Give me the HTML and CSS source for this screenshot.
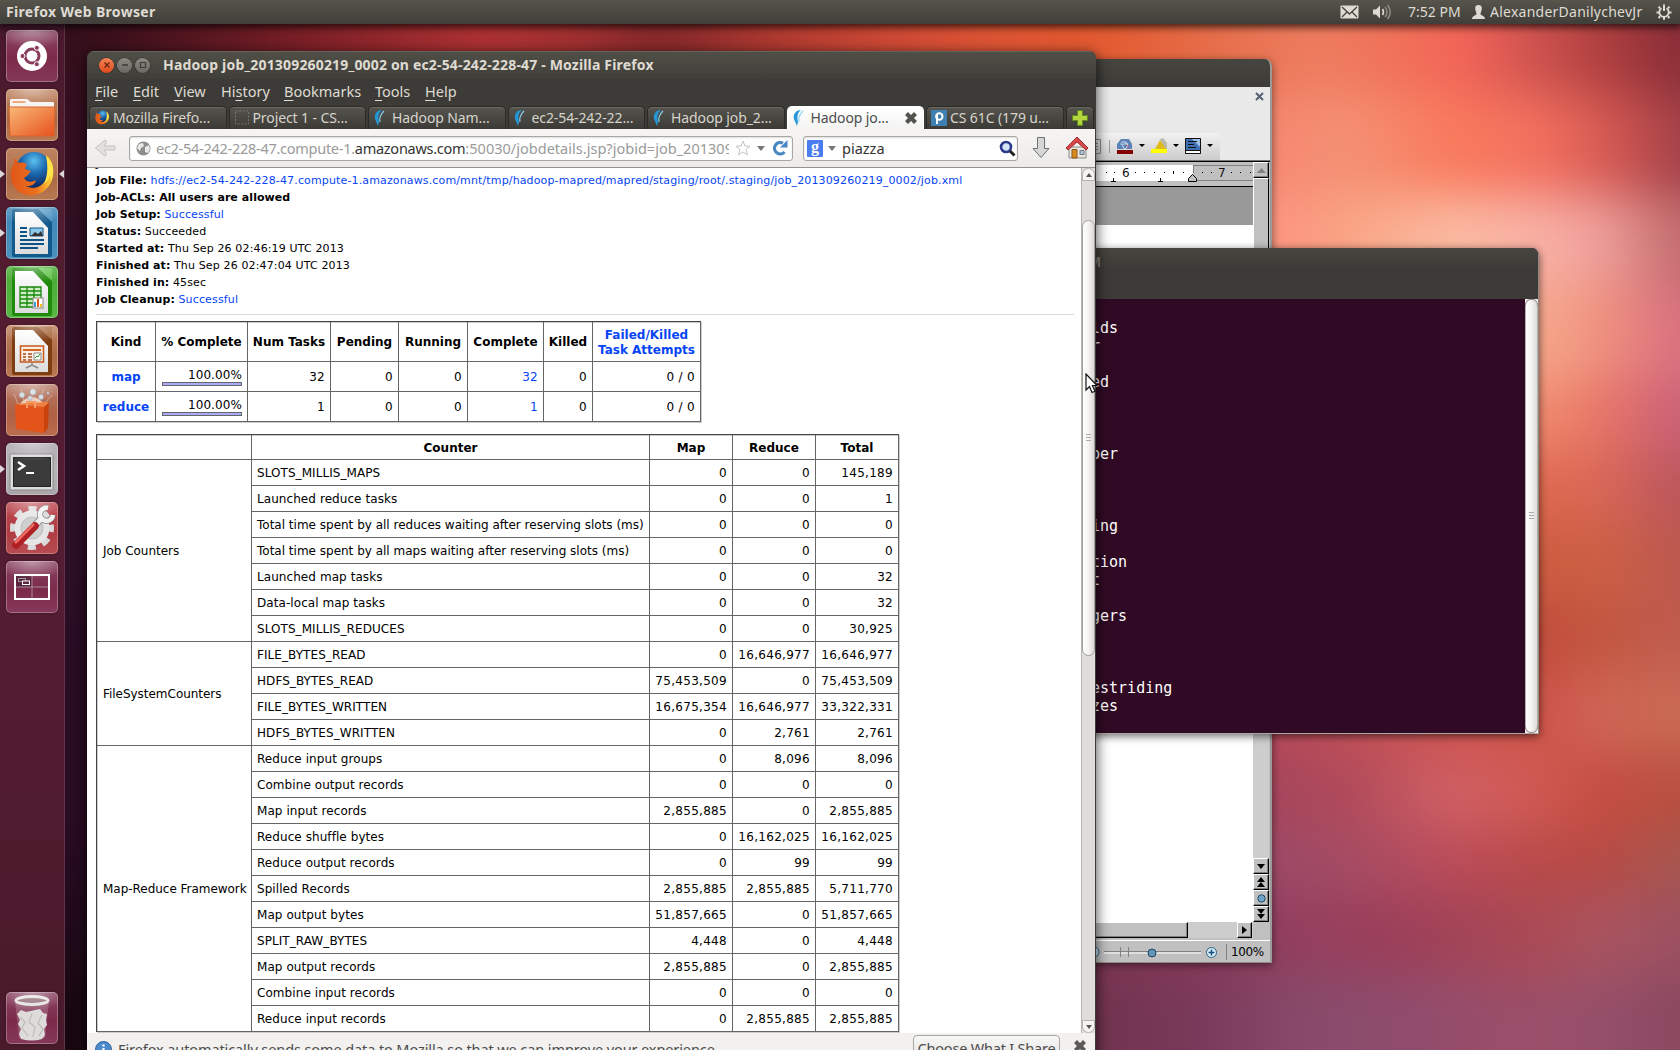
FILE: index.html
```html
<!DOCTYPE html>
<html lang="en">
<head>
<meta charset="utf-8">
<title>Hadoop job_201309260219_0002 on ec2-54-242-228-47 - Mozilla Firefox</title>
<link rel="stylesheet" href="styles.css">
</head>
<body>
<svg width="0" height="0" class="defs">
  <defs>
    <linearGradient id="orange" x1="0" y1="0" x2="1" y2="1"><stop offset="0" stop-color="#f8b878"/><stop offset="1" stop-color="#e8511c"/></linearGradient>
    <radialGradient id="globe" cx=".5" cy=".25" r=".7"><stop offset="0" stop-color="#5cc0ee"/><stop offset=".5" stop-color="#1c68b0"/><stop offset="1" stop-color="#0b2c66"/></radialGradient>
    <linearGradient id="fox" x1="0" y1="0" x2="1" y2="0"><stop offset="0" stop-color="#e0571a"/><stop offset=".6" stop-color="#ea6f1e"/><stop offset="1" stop-color="#fddc3a"/></linearGradient>
    <linearGradient id="paper" x1="0" y1="0" x2="0" y2="1"><stop offset="0" stop-color="#fff"/><stop offset="1" stop-color="#dcdcdc"/></linearGradient>
    <symbol id="firefox" viewBox="0 0 44 46">
      <circle cx="24" cy="19" r="18" fill="url(#globe)"/>
      <path d="M36 4c7 5 9 15 6 25-4 11-15 17-25 15C6 42 0 33 1 22c0-4 1-7 3-9l0-6 5 5c3-1 6 0 8 1l-2 5 6 2-4 5-3 2c2 4 7 5 12 2-1 5-6 7-11 6 9 5 19 0 22-9 2-8 1-14-1-22z" fill="url(#fox)"/>
      <path d="M36 5c7 6 9 16 5 25 0-3 0-5-1-6-1 4-3 7-6 9 4-9 4-18 2-28z" fill="#fde64a"/>
    </symbol>
    <symbol id="feather" viewBox="0 0 13 16"><path d="M8 0C3 0 0 4 1 9l3 7 1-4C4 7 4 3 8 0z" fill="#2397d8"/><path d="M6 12C5 8 7 4 10 1" fill="none" stroke="#8fd2f2" stroke-width="1.1"/></symbol>
    <symbol id="cross" viewBox="0 0 12 12"><path d="M3 0l3 3 3-3 3 3-3 3 3 3-3 3-3-3-3 3-3-3 3-3-3-3z"/></symbol>
  </defs>
</svg>
<div class="desktop">
  <div class="wallpaper"><i class="b1"></i><i class="b2"></i><i class="b3"></i><i class="b4"></i><i class="b5"></i><i class="b6"></i><i class="b7"></i><i class="b8"></i><i class="b9"></i><i class="b10"></i><i class="b11"></i><i class="b12"></i><i class="b13"></i></div>

  <header class="panel">
    <b class="app-name">Firefox Web Browser</b>
    <svg class="p-mail" width="19" height="14" viewBox="0 0 19 14"><rect x=".5" y=".5" width="18" height="13" rx="1" fill="#dfdbd2"/><path d="M2 2l7.500 7L17 2M2 12l5-5M17 12l-5-5" fill="none" stroke="#45433d" stroke-width="1.3"/></svg>
    <svg class="p-sound" width="22" height="16" viewBox="0 0 22 16"><path d="M1 5.500h3l4-4v13l-4-4H1z" fill="#dfdbd2"/><path d="M10.500 5q2 3 0 6" fill="none" stroke="#dfdbd2" stroke-width="1.600"/><path d="M13 3q4 5 0 10M15.500 1q5.500 7 0 14" fill="none" stroke="#8d8a82" stroke-width="1.600"/></svg>
    <span class="clock">7:52 PM</span>
    <svg class="p-user" width="13" height="14" viewBox="0 0 13 14"><path d="M6.500 0C9 0 10 1.500 9.800 4 9.600 6.500 8.500 7 8.500 9c0 1.500 4.500 1.500 4.500 5H0c0-3.500 4.500-3.500 4.500-5 0-2-1.100-2.500-1.300-5C3 1.500 4 0 6.500 0z" fill="#dfdbd2"/></svg>
    <span class="user">AlexanderDanilychevJr</span>
    <svg class="p-gear" width="16" height="16" viewBox="0 0 16 16"><g fill="none" stroke="#dfdbd2"><path d="M5.500 4.200a4.700 4.700 0 1 0 5 0" stroke-width="1.800"/><path d="M8 .5v6.500" stroke-width="2"/><path d="M2.500 2.800l1.500 1.500M13.500 2.800l-1.500 1.500M.5 8.500h2.500M13 8.500h2.500M2.500 14l1.700-1.700M13.500 14l-1.700-1.700M8 13v2.800" stroke-width="2"/></g></svg>
  </header>

  <nav class="launcher">
    <div class="tile plum"><svg viewBox="0 0 52 52"><circle cx="26" cy="26" r="15" fill="#fff"/><circle cx="26" cy="26" r="7" fill="none" stroke="#8a3a5a" stroke-width="3"/><g fill="#8a3a5a" stroke="#fff" stroke-width="1"><circle cx="16.500" cy="26" r="2.500"/><circle cx="30.800" cy="17.800" r="2.500"/><circle cx="30.800" cy="34.200" r="2.500"/></g></svg></div>
    <div class="tile copper"><svg viewBox="0 0 52 52"><path d="M4 11q0-1 1-1h16l4 3h22q1 0 1 1v6H4z" fill="#f7f3f0"/><path d="M6.500 13h13" stroke="#f0a070" stroke-width="2"/><path d="M3 18h46l-1 29H4z" fill="url(#orange)" stroke="#d8632c"/></svg></div>
    <div class="tile copper run focus"><svg viewBox="0 0 52 52"><use href="#firefox" x="4" y="3" width="44" height="46"/></svg></div>
    <div class="tile blue run"><svg viewBox="0 0 52 52"><rect x="6" y="2" width="40" height="48" rx="2" fill="#135a8c"/><path d="M32 2h14v13z" fill="#4c92bf"/><path d="M9 5h18l15 16v26H9z" fill="url(#paper)"/><path d="M14 21h7M14 25h7M14 29h7M14 33h24M14 37h24M14 41h18" stroke="#0d5486" stroke-width="2"/><path d="M24 21h13v8H24z" fill="#8ec8e8" stroke="#0d5486"/><path d="M25 29l4-4 3 2 3-3 2 5z" fill="#333"/></svg></div>
    <div class="tile green"><svg viewBox="0 0 52 52"><rect x="6" y="2" width="40" height="48" rx="2" fill="#1f8a0b"/><path d="M32 2h14v13z" fill="#5fc04a"/><path d="M9 5h18l15 16v26H9z" fill="url(#paper)"/><path d="M14 21h21v20H14zM14 25h21M14 29h21M14 33h21M14 37h21M21 21v20M28 21v20" fill="#cfeec4" stroke="#17870b" stroke-width="1.300"/><rect x="27" y="32" width="10" height="10" fill="#fff" stroke="#888"/><path d="M29 41v-5" stroke="#3a9ad8" stroke-width="2"/><path d="M32 41v-8" stroke="#e05a20" stroke-width="2"/><path d="M35 41v-3" stroke="#f0c020" stroke-width="2"/></svg></div>
    <div class="tile copper"><svg viewBox="0 0 52 52"><rect x="6" y="2" width="40" height="48" rx="2" fill="#7f3d12"/><path d="M32 2h14v13z" fill="#a7683d"/><path d="M9 5h18l15 16v26H9z" fill="url(#paper)"/><rect x="14.500" y="21" width="23" height="16" fill="#fbeee4" stroke="#c4581c" stroke-width="1.500"/><path d="M17 25h18" stroke="#d2671e" stroke-width="2"/><path d="M17 29h3M17 32h3M17 35h3M22 29h4M22 32h4M22 35h4" stroke="#a8481a" stroke-width="1.600"/><path d="M28 28h7v7h-7z" fill="#fff" stroke="#888"/><path d="M29 33l2-2 1 1 2-3" fill="none" stroke="#2aa02a"/><path d="M26 38v2M20 43l6-3 6 3" fill="none" stroke="#888" stroke-width="1.500"/></svg></div>
    <div class="tile copper2"><svg viewBox="0 0 52 52"><path d="M12 20L8 10M18 17l-3-12M26 16V4M33 17l5-12M38 20l8-9" stroke="#f6d6c6" stroke-opacity=".5"/><path d="M13 21q13-16 26 0z" fill="#fbe6da" fill-opacity=".8"/><g fill="#d3dade" stroke="#8f989e" stroke-width=".6"><circle cx="16" cy="11" r="2.800"/><circle cx="27" cy="8" r="3"/><circle cx="35" cy="13" r="2.600"/><circle cx="24" cy="14" r="2.300"/><circle cx="42" cy="9" r="1.200"/></g><path d="M9 20l29 3v26l-28-4z" fill="#e2541a"/><path d="M38 23l5-5-1 26-4 5z" fill="#c9430f"/><path d="M9 20l11-1 23-1-5 5z" fill="#ef8042"/><path d="M21 24v-6h8v6" fill="none" stroke="#f59a64" stroke-width="2"/></svg></div>
    <div class="tile silver run"><svg viewBox="0 0 52 52"><rect x="4" y="11" width="43" height="36" rx="1" fill="#dcdcdc" stroke="#888"/><rect x="7.500" y="14.500" width="37" height="29" fill="#3a3b3a" stroke="#222"/><path d="M12 19l6 4-6 4" fill="none" stroke="#fff" stroke-width="2.500"/><path d="M20 30h8" stroke="#fff" stroke-width="2"/></svg></div>
    <div class="tile red"><svg viewBox="0 0 52 52"><circle cx="26" cy="26" r="19" fill="none" stroke="#dadada" stroke-width="6" stroke-dasharray="8 6.920" stroke-dashoffset="4"/><circle cx="26" cy="26" r="13" fill="#dedede" stroke="#e6e6e6" stroke-width="9"/><circle cx="26" cy="26" r="11" fill="#cfcfcf" stroke="#bcbcbc"/><path d="M29 23l8-8" stroke="#777" stroke-width="7"/><path d="M42 6a6.500 6.500 0 1 0 5 7" fill="none" stroke="#777" stroke-width="6"/><path d="M29 23l8-8" stroke="#ececec" stroke-width="5.500"/><path d="M42 6a6.500 6.500 0 1 0 5 7" fill="none" stroke="#f2f2f2" stroke-width="4.500"/><path d="M10 43L29 24" stroke="#b01f24" stroke-width="7.500" stroke-linecap="round"/><path d="M9 41L28 22" stroke="#ee6a64" stroke-width="2.500"/></svg></div>
    <div class="tile plum"><svg viewBox="0 0 52 52"><rect x="9" y="14" width="34" height="24" fill="none" stroke="#fff" stroke-width="2"/><path d="M10 15h16v11H10z" fill="#5a2440"/><path d="M26 15v22M10 26h32" stroke="#a88a96"/><rect x="12.500" y="17.500" width="7" height="3" fill="none" stroke="#999"/><rect x="16.500" y="20" width="7" height="3.500" fill="#5a2440" stroke="#fff"/></svg></div>
    <div class="tile plum trash"><svg viewBox="0 0 52 52"><path d="M9 9l4 37q13 4 26 0l4-37z" fill="#fff" fill-opacity=".18"/><path d="M11 22l4-4 5 2 5-1 4-1 5-1 3 4 4 1-1 6 1 5-3 4 1 6-3 4q-10 3-21 0l-2-5 2-5-3-5 2-4z" fill="#dedcda"/><path d="M14 25l5 5-3 6 6 8M26 22l-3 8 6 5-2 10M36 23l-4 8 5 6-4 7" fill="none" stroke="#bfbbb9" stroke-width="1.200"/><ellipse cx="26" cy="8.500" rx="16" ry="4" fill="#8d6673" stroke="#e4e2e0" stroke-width="3"/></svg></div>
  </nav>

  <section class="win writer">
    <div class="w-title"></div>
    <div class="w-chrome">
      <span class="w-close"><svg width="9" height="9" viewBox="0 0 9 9"><path d="M1 1l7 7M8 1L1 8" stroke="#536173" stroke-width="2"/></svg></span>
      <div class="w-tools">
        <svg width="124" height="27" viewBox="1096 133 124 27"><path d="M1092 139.500h8.500v14h-8.500M1094 143.500h4M1094 146.500h4M1094 149.500h4" fill="none" stroke="#888"/><path d="M1109.500 140v13" stroke="#999"/><path d="M1117 149v-5l4-5h8l3 5v5z" fill="#5c83b8"/><path d="M1121 145q0-4 4-3t2 5-4 0 4-3" fill="none" stroke="#dbe7f5"/><path d="M1126 145l3 2" stroke="#d05050"/><path d="M1117 150h16v4h-16z" fill="#800000"/><path d="M1139 144h6l-3 3zM1173 144h6l-3 3zM1207 144h6l-3 3z"/><path d="M1160 139l3-1 4 5v6h-3z" fill="#b9b9ac"/><path d="M1155 149l5-9 6 9z" fill="#e2b91c"/><path d="M1151 149h16v4h-16z" fill="#ff0"/><path d="M1185.500 138.500h15v15h-15z" fill="#3e70b4" stroke="#111"/><path d="M1192 139h8v8z" fill="#9ebfe4"/><path d="M1188 141.500h9M1188 144.500h6M1188 147.500h8" stroke="#111"/><path d="M1185.500 150.500h15v3h-15z" fill="#fff" stroke="#111"/></svg>
      </div>
    </div>
    <div class="w-main">
      <div class="w-doc">
        <div class="ruler">
          <svg width="157" height="24" viewBox="1096 162 157 24"><path d="M1096 165h97v16h-97z" fill="#fff"/><path d="M1193 165.500h60M1193 180.500h60" stroke="#808080"/><path d="M1193.500 165v8" stroke="#808080"/><g fill="#000"><path d="M1106 172h1v1h-1zM1114 172h1v1h-1zM1135 172h1v1h-1zM1144 172h1v1h-1zM1154 172h1v1h-1zM1164 172h1v1h-1zM1173 171h1v3h-1zM1183 172h1v1h-1zM1202 172h1v1h-1zM1211 172h1v1h-1zM1231 172h1v1h-1zM1240 172h1v1h-1zM1250 172h1v1h-1z"/></g><path d="M1113.500 178v3M1111 181.500h5M1160.500 178v3M1158 181.500h5" stroke="#000"/><path d="M1192.500 174.500l4 4v3h-8v-3z" fill="#c0c0c0" stroke="#000"/><text x="1122" y="177" class="rn">6</text><text x="1218" y="177" class="rn">7</text></svg>
        </div>
        <div class="grey"></div>
        <div class="page"></div>
        <div class="hbar"><span class="hthumb"></span><span class="hbtn"><svg width="6" height="8"><path d="M0 0l5 4-5 4z"/></svg></span></div>
      </div>
      <div class="vbar">
        <span class="vb up"><svg width="9" height="5"><path d="M0 5l4.500-5L9 5z" fill="#808080"/></svg></span>
        <span class="vthumb"></span><span class="vtrack"></span>
        <span class="vb"><svg width="8" height="5"><path d="M0 0h8L4 5z"/></svg></span>
        <span class="vb"><svg width="8" height="10"><path d="M0 5l4-5 4 5zM0 10l4-5 4 5z"/></svg></span>
        <span class="vb"><svg width="9" height="9"><circle cx="4.500" cy="4.500" r="3.700" fill="#6ea3c6" stroke="#234d6c"/></svg></span>
        <span class="vb"><svg width="8" height="10"><path d="M0 0h8L4 5zM0 5h8l-4 5z"/></svg></span>
        <span class="vcorner"></span>
      </div>
    </div>
    <div class="w-status">
      <svg width="130" height="21" viewBox="1096 941 130 21"><circle cx="1094" cy="952" r="5" fill="#c9e2f2" stroke="#2f5e80"/><path d="M1104 951.500h97" stroke="#808080"/><path d="M1104 953h97" stroke="#fff"/><path d="M1120.500 947v10M1128.500 947v10" stroke="#808080"/><circle cx="1152" cy="953" r="4" fill="#6595b8" stroke="#1d4566"/><circle cx="1211.500" cy="952.500" r="5" fill="#d5edf9" stroke="#2f5e80"/><path d="M1208.500 952.500h6M1211.500 949.500v6" stroke="#11507e" stroke-width="1.500"/></svg>
      <span class="pct">100%</span>
    </div>
  </section>

  <section class="win terminal">
    <div class="t-title"><span>M</span></div>
    <div class="t-body">
<pre>

lds
r

ed



ber



ing

tion
t

gers



estriding
zes</pre>
      <div class="t-scroll"><span class="grip"></span></div>
    </div>
  </section>

  <section class="win firefox">
    <div class="f-title"><span class="wb close"><svg width="8" height="8"><path d="M1.500 1.500l5 5M6.500 1.500l-5 5" stroke="#6b2510" stroke-width="1.300"/></svg></span><span class="wb"><svg width="8" height="8"><path d="M1 4h6" stroke="#3a3935" stroke-width="1.300"/></svg></span><span class="wb"><svg width="8" height="8"><path d="M1.500 1.500h5v5h-5z" fill="none" stroke="#3a3935" stroke-width="1.200"/></svg></span><b>Hadoop job_201309260219_0002 on ec2-54-242-228-47 - Mozilla Firefox</b></div>
    <div class="f-menu"><span class="m1"><u>F</u>ile</span><span class="m2"><u>E</u>dit</span><span class="m3"><u>V</u>iew</span><span class="m4">Hi<u>s</u>tory</span><span class="m5"><u>B</u>ookmarks</span><span class="m6"><u>T</u>ools</span><span class="m7"><u>H</u>elp</span></div>
    <div class="tabs">
      <div class="tab"><svg width="14" height="15"><use href="#firefox" width="14" height="15"/></svg><span>Mozilla Firefo...</span></div>
      <div class="tab"><svg width="14" height="15"><rect x=".5" y="1" width="13" height="13" fill="none" stroke="#77756e" stroke-dasharray="2 1.500"/></svg><span>Project 1 - CS...</span></div>
      <div class="tab"><svg width="14" height="16"><use href="#feather" width="13" height="16"/></svg><span>Hadoop Nam...</span></div>
      <div class="tab"><svg width="14" height="16"><use href="#feather" width="13" height="16"/></svg><span>ec2-54-242-22...</span></div>
      <div class="tab"><svg width="14" height="16"><use href="#feather" width="13" height="16"/></svg><span>Hadoop job_2...</span></div>
      <div class="tab active"><svg width="14" height="16"><use href="#feather" width="13" height="16"/></svg><span>Hadoop jo...</span><svg class="tx" width="12" height="12" fill="#55534e"><use href="#cross" width="12" height="12"/></svg></div>
      <div class="tab last"><svg width="16" height="16"><rect width="16" height="16" fill="#3f7fb2"/><path d="M6 14V4" stroke="#fff" stroke-width="2"/><circle cx="8.300" cy="6.500" r="3.200" fill="none" stroke="#fff" stroke-width="2"/></svg><span>CS 61C (179 u...</span></div>
      <div class="tab plus"><svg width="16" height="16"><path d="M5.500 .5h5v5h5v5h-5v5h-5v-5h-5v-5h5z" fill="#b3d63e" stroke="#5e8a1c"/></svg></div>
    </div>
    <div class="f-bar">
      <svg class="back" width="24" height="20" viewBox="0 0 24 20"><path d="M11 2q2 1 1 3l-2 3h11v4H10l2 3q1 2-1 3L1.500 10z" fill="#e3e1de" stroke="#c4c1bc"/></svg>
      <div class="field url">
        <svg width="15" height="15" viewBox="0 0 15 15"><circle cx="7.500" cy="7.500" r="7" fill="#8e8e8c"/><path d="M3 3l4-1 1 3-3 2-1 3-3-3zM9 6l4-2 1 4-2 4-3-1z" fill="#e9e9e8"/></svg>
        <div class="addr"><span>ec2-54-242-228-47.compute-1.</span><span class="host">amazonaws.com</span><span class="path">:50030/jobdetails.jsp?jobid=job_201309</span></div>
        <svg class="star" width="16" height="16" viewBox="0 0 16 16"><path d="M8 1l2 5 5 .3-4 3.300 1.500 5.200L8 12l-4.500 2.800L5 9.600 1 6.300 6 6z" fill="#fff" stroke="#c3c3c3"/></svg>
        <svg class="drop" width="8" height="5"><path d="M0 0h8L4 5z" fill="#777"/></svg>
        <svg class="reload" width="16" height="16" viewBox="0 0 16 16"><path d="M12.500 12A5.700 5.700 0 1 1 11 3.200" fill="none" stroke="#4a88c2" stroke-width="3.200"/><path d="M15.500 0v7.500H8z" fill="#4a88c2"/></svg>
      </div>
      <div class="field search"><svg width="16" height="17"><rect width="16" height="17" rx="1" fill="#4a7df0"/><text x="4" y="12" class="goog">g</text></svg><svg width="8" height="5"><path d="M0 0h8L4 5z" fill="#777"/></svg><span class="q">piazza</span><svg class="mag" width="17" height="17" viewBox="0 0 17 17"><circle cx="7" cy="7" r="5" fill="#d5e4f6" stroke="#2b3a8c" stroke-width="2.600"/><path d="M11 11l4.500 4.500" stroke="#222" stroke-width="3"/></svg></div>
      <svg class="down" width="20" height="24" viewBox="0 0 20 24"><path d="M6.500 1.500h7v11h4.500L10 21.500 2 12.500h4.500z" fill="#d5d7d6" stroke="#6f716f"/></svg>
      <svg class="home" width="24" height="24" viewBox="0 0 24 24"><path d="M4 11h17v11H4z" fill="#e8e6e2" stroke="#8d8b87"/><path d="M7 13.500h5V22H7z" fill="#d98a1e" stroke="#8a5a14"/><path d="M15 14.500h4v4h-4z" fill="#a9c6e2" stroke="#777"/><path d="M12 1l11 11-2 2-9-8-9 8-2-2z" fill="#d9484c" stroke="#a32b30"/></svg>
    </div>
    <div class="f-view">
      <main class="doc">
        <div class="info">
          <p><b>Job</b></p>
          <p><b>Job File:</b> <a>hdfs://ec2-54-242-228-47.compute-1.amazonaws.com/mnt/tmp/hadoop-mapred/mapred/staging/root/.staging/job_201309260219_0002/job.xml</a></p>
          <p><b>Job-ACLs: All users are allowed</b></p>
          <p><b>Job Setup:</b> <a>Successful</a></p>
          <p><b>Status:</b> Succeeded</p>
          <p><b>Started at:</b> Thu Sep 26 02:46:19 UTC 2013</p>
          <p><b>Finished at:</b> Thu Sep 26 02:47:04 UTC 2013</p>
          <p><b>Finished in:</b> 45sec</p>
          <p><b>Job Cleanup:</b> <a>Successful</a></p>
        </div>
        <hr>
        <table class="tasks">
          <colgroup><col class="c59"><col class="c92"><col class="c83"><col class="c68"><col class="c69"><col class="c76"><col class="c49"><col class="c108"></colgroup>
          <tr><th>Kind</th><th>% Complete</th><th>Num Tasks</th><th>Pending</th><th>Running</th><th>Complete</th><th>Killed</th><th><a>Failed/Killed<br>Task Attempts</a></th></tr>
          <tr><th><a>map</a></th><td class="n pc">100.00%<i></i></td><td class="n">32</td><td class="n">0</td><td class="n">0</td><td class="n"><a>32</a></td><td class="n">0</td><td class="n">0 / 0</td></tr>
          <tr><th><a>reduce</a></th><td class="n pc">100.00%<i></i></td><td class="n">1</td><td class="n">0</td><td class="n">0</td><td class="n"><a>1</a></td><td class="n">0</td><td class="n">0 / 0</td></tr>
        </table>
        <table class="counters">
          <colgroup><col class="c155"><col class="c398"><col class="c83"><col class="c83"><col class="c83"></colgroup>
          <tr><th></th><th>Counter</th><th>Map</th><th>Reduce</th><th>Total</th></tr>
          <tr><td rowspan="7" class="g">Job Counters</td><td>SLOTS_MILLIS_MAPS</td><td class="n">0</td><td class="n">0</td><td class="n">145,189</td></tr>
          <tr><td>Launched reduce tasks</td><td class="n">0</td><td class="n">0</td><td class="n">1</td></tr>
          <tr><td class="long">Total time spent by all reduces waiting after reserving slots (ms)</td><td class="n">0</td><td class="n">0</td><td class="n">0</td></tr>
          <tr><td class="long">Total time spent by all maps waiting after reserving slots (ms)</td><td class="n">0</td><td class="n">0</td><td class="n">0</td></tr>
          <tr><td>Launched map tasks</td><td class="n">0</td><td class="n">0</td><td class="n">32</td></tr>
          <tr><td>Data-local map tasks</td><td class="n">0</td><td class="n">0</td><td class="n">32</td></tr>
          <tr><td>SLOTS_MILLIS_REDUCES</td><td class="n">0</td><td class="n">0</td><td class="n">30,925</td></tr>
          <tr><td rowspan="4" class="g">FileSystemCounters</td><td>FILE_BYTES_READ</td><td class="n">0</td><td class="n">16,646,977</td><td class="n">16,646,977</td></tr>
          <tr><td>HDFS_BYTES_READ</td><td class="n">75,453,509</td><td class="n">0</td><td class="n">75,453,509</td></tr>
          <tr><td>FILE_BYTES_WRITTEN</td><td class="n">16,675,354</td><td class="n">16,646,977</td><td class="n">33,322,331</td></tr>
          <tr><td>HDFS_BYTES_WRITTEN</td><td class="n">0</td><td class="n">2,761</td><td class="n">2,761</td></tr>
          <tr><td rowspan="11" class="g">Map-Reduce Framework</td><td>Reduce input groups</td><td class="n">0</td><td class="n">8,096</td><td class="n">8,096</td></tr>
          <tr><td>Combine output records</td><td class="n">0</td><td class="n">0</td><td class="n">0</td></tr>
          <tr><td>Map input records</td><td class="n">2,855,885</td><td class="n">0</td><td class="n">2,855,885</td></tr>
          <tr><td>Reduce shuffle bytes</td><td class="n">0</td><td class="n">16,162,025</td><td class="n">16,162,025</td></tr>
          <tr><td>Reduce output records</td><td class="n">0</td><td class="n">99</td><td class="n">99</td></tr>
          <tr><td>Spilled Records</td><td class="n">2,855,885</td><td class="n">2,855,885</td><td class="n">5,711,770</td></tr>
          <tr><td>Map output bytes</td><td class="n">51,857,665</td><td class="n">0</td><td class="n">51,857,665</td></tr>
          <tr><td>SPLIT_RAW_BYTES</td><td class="n">4,448</td><td class="n">0</td><td class="n">4,448</td></tr>
          <tr><td>Map output records</td><td class="n">2,855,885</td><td class="n">0</td><td class="n">2,855,885</td></tr>
          <tr><td>Combine input records</td><td class="n">0</td><td class="n">0</td><td class="n">0</td></tr>
          <tr><td>Reduce input records</td><td class="n">0</td><td class="n">2,855,885</td><td class="n">2,855,885</td></tr>
        </table>
      </main>
      <div class="scroll">
        <span class="sb top"><svg width="6" height="4"><path d="M0 4l3-4 3 4z" fill="#555"/></svg></span>
        <span class="gap"></span><span class="thumb"><span class="grip"></span></span>
        <span class="gap rest"></span>
        <span class="sb bottom"><svg width="6" height="4"><path d="M0 0h6L3 4z" fill="#555"/></svg></span>
      </div>
    </div>
    <div class="notice">
      <svg width="17" height="17"><circle cx="8.500" cy="8.500" r="8" fill="#4c8acb" stroke="#2d5f96"/><path d="M8.500 3.500v2M8.500 7v6" stroke="#fff" stroke-width="2.200"/></svg>
      <span class="msg">Firefox automatically sends some data to Mozilla so that we can improve your experience.</span>
      <span class="choose">Choose What I Share</span>
      <svg class="nx" width="12" height="12" fill="#5d5b56"><use href="#cross" width="12" height="12"/></svg>
    </div>
  </section>
  <svg class="cursor" width="14" height="22" viewBox="0 0 14 22"><path d="M1 1v16l3.500-3.500L7 19.500l3-1.300-2.600-5.700H12z" fill="#fff" stroke="#111" stroke-width="1.200"/></svg>
</div>
</body>
</html>
```

FILE: styles.css
```css
* { box-sizing: border-box; }
body { margin: 0; overflow: hidden; font-family: "Noto Sans", sans-serif; font-size: 14px; }
svg { display: block; flex: none; }
.defs { position: absolute; }
.desktop { position: relative; width: 1680px; height: 1050px; overflow: hidden; background: #1a0812; }

/* wallpaper: horizontal colour bands blended together */
.wallpaper { position: absolute; inset: -60px -60px -60px 0; display: flex; flex-direction: column; filter: blur(24px); }
.wallpaper i { flex: none; height: 80px; }
.wallpaper .b1 { height: 155px; background: linear-gradient(90deg, #2a0d1c 0, #3a101c 110px, #7a1f26 300px, #ae3133 480px, #a03030 580px, #82272a 660px, #b03a30 780px, #cf4a35 900px, #de5534 1000px, #e2592f 1096px, #e66f4c 1220px, #ee7d60 1320px, #f07058 1400px, #f46558 1460px, #d05450 1530px, #b0403f 1600px, #882d38 1680px); }
.wallpaper .b2 { height: 100px; background: linear-gradient(90deg, #330f20 100px, #f08068 1200px, #f58871 1272px, #f49174 1350px, #f97a5c 1450px, #f3705f 1540px, #cf5550 1620px, #a04048 1680px); }
.wallpaper .b3 { height: 90px; background: linear-gradient(90deg, #300f22 100px, #fd9480 1200px, #fd9480 1272px, #f9a585 1350px, #fbbba2 1450px, #f8b0a5 1540px, #f0a09b 1600px, #c06a6c 1680px); }
.wallpaper .b4 { height: 95px; background: linear-gradient(90deg, #300f22 100px, #f6a98c 1540px, #ee8d7c 1610px, #d86f80 1680px); }
.wallpaper .b5 { height: 70px; background: linear-gradient(90deg, #2d0f25 100px, #f08c70 1540px, #e87565 1600px, #c9607a 1680px); }
.wallpaper .b6 { height: 70px; background: linear-gradient(90deg, #2d0f25 100px, #e06a50 1540px, #da6858 1600px, #b9555d 1680px); }
.wallpaper .b7 { height: 80px; background: linear-gradient(90deg, #2d0f25 100px, #cc5c40 1540px, #cd6044 1600px, #bc5850 1680px); }
.wallpaper .b8 { height: 70px; background: linear-gradient(90deg, #2a0c24 100px, #c04c3c 1540px, #c2573f 1600px, #bf5c50 1680px); }
.wallpaper .b9 { height: 85px; background: linear-gradient(90deg, #2a0c22 100px, #b54a5a 1272px, #c05058 1350px, #cc5450 1450px, #ce5248 1540px, #cf6555 1600px, #c96a54 1680px); }
.wallpaper .b10 { height: 75px; background: linear-gradient(90deg, #2a0c22 100px, #a5455c 1272px, #b04a5a 1350px, #d06065 1450px, #d05a52 1540px, #c44c40 1600px, #b85040 1680px); }
.wallpaper .b11 { height: 65px; background: linear-gradient(90deg, #260b20 100px, #9c4a68 1272px, #a54c64 1350px, #bb4c5a 1450px, #b84a48 1540px, #b84a45 1600px, #a55850 1680px); }
.wallpaper .b12 { background: linear-gradient(90deg, #200a1a 100px, #863a58 1200px, #943f5e 1300px, #9c3f59 1400px, #ab4a54 1540px, #aa5560 1600px, #9c5060 1680px); }
.wallpaper .b13 { height: 150px; background: linear-gradient(90deg, #180710 100px, #71344f 1100px, #79395a 1200px, #874b6b 1300px, #8f4c6d 1400px, #9c4e68 1520px, #96506a 1600px, #8a485f 1680px); }

/* top panel */
.panel { position: absolute; inset: 0 0 auto 0; height: 24px; display: flex; align-items: center; padding: 0 8px 1px 6px; color: #dfdbd2; background: linear-gradient(#56544b, #3f3e39); box-shadow: 0 1px 8px 2px rgba(0,0,0,.75); z-index: 5; white-space: nowrap; }
.app-name { flex: 1; letter-spacing: .33px; }
.p-sound { margin-left: 13px; }
.clock { margin-left: 14px; width: 64px; letter-spacing: 0; }
.user { margin-left: 5px; width: 166px; letter-spacing: .25px; }

/* launcher */
.launcher { position: absolute; left: 0; top: 24px; bottom: 0; width: 65px; padding: 6px 0 6px 6px; display: flex; flex-direction: column; gap: 7px; background: linear-gradient(#4a1a2c, #551d31 30%, #521c30 70%, #481a2a); border-right: 1px solid #613347; }
.tile { position: relative; flex: none; width: 52px; height: 52px; border-radius: 5px; box-shadow: inset 0 0 0 1px rgba(255,255,255,.28), 0 0 3px rgba(0,0,0,.3); }
.tile::after { content: ""; position: absolute; inset: 0; border-radius: 5px; background: radial-gradient(ellipse 70% 35% at 50% 0, rgba(255,255,255,.45), transparent); }
.tile svg { width: 52px; height: 52px; }
.plum { background: linear-gradient(#8b4464, #7c2a4a 55%, #86395a); }
.copper { background: linear-gradient(#c08462, #ab6a45 60%, #b97a52); }
.copper2 { background: linear-gradient(#b67a65, #b06045 60%, #bb6e50); }
.blue { background: linear-gradient(#3f87b8, #4b90bd); }
.green { background: linear-gradient(#4aab35, #58b644); }
.silver { background: linear-gradient(#a9a3a8, #bab5ba 50%, #a9a5a9); }
.red { background: linear-gradient(#bd4a50, #b03a42 55%, #b84c52); }
.trash { margin-top: auto; }
.run::before { content: ""; position: absolute; left: -6px; top: 22px; border: 4px solid transparent; border-left: 5px solid #dcd6da; border-right: 0; }
.focus::after { inset: 22px -6px auto auto; background: none; border: 4px solid transparent; border-right: 5px solid #dcd6da; border-left: 0; border-radius: 0; }

.win { position: absolute; overflow: hidden; display: flex; flex-direction: column; }

/* word processor window */
.writer { left: 1090px; top: 59px; width: 182px; height: 904px; border-radius: 0 7px 0 0; background: #c0c0c0; border-right: 2px solid #9a9a96; border-bottom: 1px solid #8e8b85; box-shadow: 0 2px 8px rgba(0,0,0,.5); padding-left: 6px; }
.w-title { flex: none; height: 28px; margin-right: -2px; margin-left: -6px; background: linear-gradient(#46453f, #3c3b37); }
.w-chrome { flex: none; height: 73px; margin-left: -6px; padding-left: 6px; background: #e9e9e9; display: flex; flex-direction: column; justify-content: space-between; }
.w-close { align-self: flex-end; padding: 5px 6px; }
.w-tools { width: 124px; height: 27px; background: linear-gradient(#f2f2f2, #cbcbcb); }
.w-main { flex: 1; display: flex; border-top: 1px solid #777; box-shadow: inset 0 1px #000; padding-top: 1px; }
.w-doc { width: 157px; display: flex; flex-direction: column; }
.ruler { height: 25px; border-bottom: 1px solid #000; }
.rn { font: 12px "DejaVu Sans", sans-serif; fill: #111; }
.grey { height: 38px; background: #999; }
.page { flex: 1; background: #fff; }
.hbar { height: 16px; display: flex; background: #cdcdcd; margin-bottom: 2px; }
.hthumb { width: 92px; background: #c0c0c0; border: 1px solid #000; border-left: 0; border-top-color: #fff; box-shadow: inset -1px -1px #808080; }
.hbtn, .vb { display: flex; align-items: center; justify-content: center; background: #c0c0c0; border: 1px solid; border-color: #fff #000 #000 #fff; box-shadow: inset -1px -1px #808080; }
.hbtn { margin-left: auto; margin-right: 1px; width: 15px; }
.vbar { width: 16px; display: flex; flex-direction: column; }
.vb { height: 16px; flex: none; }
.vthumb { height: 150px; background: #c0c0c0; border: 1px solid #fff; border-right-color: #000; }
.vtrack { flex: 1; background: #cdcdcd; }
.vcorner { height: 18px; }
.w-status { flex: none; height: 22px; border-top: 1px solid #fff; display: flex; align-items: center; }
.pct { font: 12px/15px "DejaVu Sans", sans-serif; letter-spacing: -.4px; border-left: 1px solid #808080; padding: 1px 0 0 4px; }

/* terminal window */
.terminal { left: 1080px; top: 248px; width: 459px; height: 486px; border-radius: 0 7px 0 0; box-shadow: 0 2px 9px rgba(0,0,0,.6); border-right: 1px solid #8e8b85; border-bottom: 1px solid #aaa7a0; background: #300a24; }
.t-title { flex: none; height: 51px; margin-right: -1px; background: linear-gradient(#46453f, #3c3b37 40%); color: #807d77; font-weight: bold; padding: 4px 0 0 8px; }
.t-body { flex: 1; display: flex; justify-content: space-between; }
pre { margin: 2px 0 0 11px; color: #fff; font: 15px/18px "DejaVu Sans Mono", monospace; }
.t-scroll { width: 13px; border: 1px solid #b5b2ac; border-radius: 7px; background: linear-gradient(90deg, #fff, #f4f3f2 50%, #dcdad8); box-shadow: 0 0 0 6px #efeeed; clip-path: inset(0); display: flex; align-items: center; justify-content: center; }
.grip { width: 5px; height: 8px; background: repeating-linear-gradient(#aaa 0 1px, transparent 1px 3px); }

/* browser window */
.firefox { left: 87px; top: 51px; width: 1009px; height: 1011px; border-radius: 7px 7px 0 0; background: #3c3b37; box-shadow: 0 3px 14px rgba(0,0,0,.75); white-space: nowrap; }
.f-title { flex: none; height: 28px; display: flex; align-items: center; gap: 3px; padding: 0 0 1px 12px; background: linear-gradient(#504f47, #3f3e39); border-top: 1px solid #64635c; color: #dfdbd2; }
.f-title b { margin-left: 10px; letter-spacing: .17px; line-height: 18px; margin-top: -1px; }
.wb { width: 15px; height: 15px; border-radius: 50%; display: grid; place-items: center; background: linear-gradient(#8b8981, #696862); box-shadow: 0 0 0 .5px #2e2d2a; }
.wb.close { background: linear-gradient(#f58458, #df4a1c); }
.f-menu { flex: none; height: 27px; display: flex; align-items: center; padding: 0 0 4px 8px; color: #dfdbd2; font-size: 14.5px; }
.f-menu u { text-underline-offset: 3px; }
.m1 { width: 38px; } .m2 { width: 41px; } .m3 { width: 47px; } .m4 { width: 63px; } .m5 { width: 91px; } .m6 { width: 50px; }
.tabs { flex: none; height: 23px; display: flex; gap: 2px; padding-left: 2px; }
.tab { width: 137.5px; flex: none; display: flex; align-items: center; gap: 4px; padding: 0 0 1px 5px; background: linear-gradient(#55544e, #3b3a36); border: 1px solid #2b2a27; border-bottom: 0; border-radius: 5px 5px 0 0; color: #d8d4cb; box-shadow: inset 0 1px #6b6a63; letter-spacing: -.1px; }
.tab.active { background: linear-gradient(#fff, #f4f3f2); border-color: #fff; color: #4c4c4c; box-shadow: none; }
.tab.last { gap: 3px; padding-left: 4px; }
.tx { margin-left: auto; margin-right: 6px; }
.plus { width: 28px; padding-left: 5px; }
.f-bar { flex: none; height: 39px; display: flex; align-items: center; padding-left: 7px; background: linear-gradient(#f6f5f4, #ecebe9); border-bottom: 1px solid #96938c; margin-right: 1px; }
.field { height: 25px; background: #fff; border: 1px solid #a9a6a0; border-radius: 3px; display: flex; align-items: center; font-size: 14.5px; box-shadow: inset 0 1px 2px #ddd; }
.url { width: 664px; margin-left: 11px; padding-left: 6px; color: #9a9a9a; }
.addr { width: 573px; margin-left: 5px; overflow: hidden; letter-spacing: -.27px; flex: none; }
.host { color: #333; }
.path { letter-spacing: .02px; }
.star { margin-left: 6px; }
.drop { margin-left: 6px; }
.reload { margin-left: 7px; }
.search { width: 215px; margin-left: 10px; padding-left: 3px; color: #333; gap: 5px; }
.goog { fill: #fff; font: bold 16px "Liberation Serif", serif; }
.q { margin-left: 1px; }
.mag { margin-left: auto; margin-right: 1px; }
.down { margin-left: 13px; }
.home { margin-left: 14px; }
.f-view { flex: none; height: 865px; display: flex; background: #fff; overflow: hidden; margin-right: 1px; }
.doc { width: 994px; flex: none; padding: 0 7px 0 9px; font: 12px/15px "DejaVu Sans", sans-serif; color: #000; }
.doc a { color: #0645f5; }
.info { margin-top: -13px; font-size: 11px; line-height: 17px; letter-spacing: .14px; }
.info b { letter-spacing: .07px; }
.info p { margin: 0; }
.doc hr { margin: 6px 0; border: 0; height: 1px; background: #d8d8d8; }
table { table-layout: fixed; border-spacing: 0; border: 0 solid #444; border-width: 1px 0 0 1px; box-shadow: 1px 1px #ccc, inset 1px 1px #ccc; margin-bottom: 12px; }
.tasks { width: 605px; } .counters { width: 803px; }
col.c59 { width: 59px; } col.c92 { width: 92px; } col.c83 { width: 83px; } col.c68 { width: 68px; } col.c69 { width: 69px; } col.c76 { width: 76px; } col.c49 { width: 49px; } col.c108 { width: 108px; } col.c155 { width: 155px; } col.c398 { width: 398px; }
td, th { border: 0 solid #666; border-width: 0 1px 1px 0; padding: 2px 5px 0; height: 26px; letter-spacing: .07px; }
th { padding: 2px 0 0; letter-spacing: 0; }
td.long { letter-spacing: 0; }
td.g { padding-left: 6px; padding-right: 0; letter-spacing: -.03px; }
.tasks tr:first-child th { height: 40px; } .tasks td, .tasks th { height: 30px; }
.counters th { height: 25px; }
td.n { text-align: right; letter-spacing: .3px; padding-left: 0; }
td.pc { letter-spacing: .1px; }
.pc i { display: block; width: 80px; height: 4px; margin: -1px 0 1px 6px; border: 1px solid #666; background: #aaf; }
.scroll { width: 14px; display: flex; flex-direction: column; border-left: 1px solid #b9b6b0; background: #dfdddb; }
.sb { height: 13px; flex: none; display: grid; place-items: center; background: #f5f4f3; border: 1px solid #b5b2ac; }
.sb.top { border-radius: 7px 7px 0 0; } .sb.bottom { border-radius: 0 0 7px 7px; }
.gap { height: 39px; } .rest { flex: 1; height: auto; }
.thumb { height: 436px; border: 1px solid #a3a09a; border-radius: 7px; background: linear-gradient(90deg, #fff, #f4f3f2 50%, #dcdad8); display: grid; place-items: center; }
.notice { flex: 1; display: flex; align-items: flex-start; background: #f2f1f0; margin-right: 1px; padding: 8px 0 0 8px; color: #4c4c4c; font-size: 14.5px; line-height: 17px; }
.msg { margin-left: 6px; width: 794px; letter-spacing: -.1px; }
.choose { width: 147px; height: 27px; margin-top: -6px; margin-left: 1px; line-height: 25px; text-align: center; border: 1px solid #a9a6a0; border-radius: 4px; background: linear-gradient(#f8f8f7, #e4e2e0); letter-spacing: -.2px; }
.nx { margin-left: 14px; margin-top: -1px; }
.cursor { position: absolute; left: 1085px; top: 373px; }
```
